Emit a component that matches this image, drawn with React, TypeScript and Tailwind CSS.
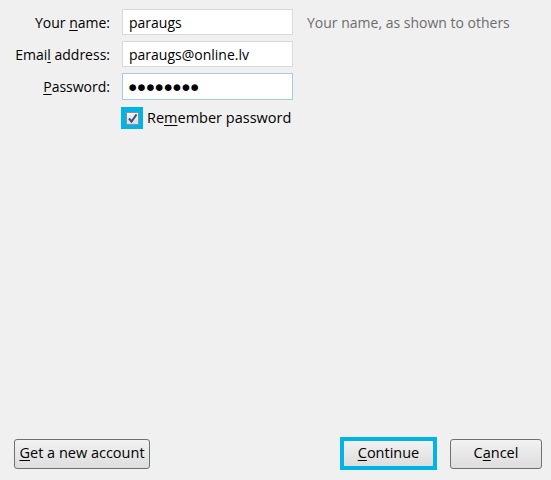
import React from 'react';

const U: React.FC<{ children: React.ReactNode }> = ({ children }) => <span className="underline underline-offset-2">{children}</span>;

const App: React.FC = () => {
  const btn =
    'h-[30px] rounded-[3px] border border-[#707070] bg-gradient-to-b from-[#f2f2f2] to-[#dddddd] text-[14.5px] text-black leading-none';

  return (
    <div className="h-[480px] w-[551px] bg-[#f0f0f0] flex flex-col justify-between font-['Open_Sans','Noto_Sans',sans-serif] text-[14px] text-black">
      <div className="pt-[9px] grid grid-cols-[110px_171px_auto] gap-x-3 gap-y-[6px] items-center">
        <label className="text-right">Your <U>n</U>ame:</label>
        <input
          readOnly
          value="paraugs"
          className="h-[26px] border border-[#d9d9d9] bg-white px-[6px] outline-none"
        />
        <span className="pl-[2px] text-[#6d6d6d]">Your name, as shown to others</span>

        <label className="text-right">Emai<U>l</U> address:</label>
        <input
          readOnly
          value="paraugs@online.lv"
          className="h-[26px] border border-[#d9d9d9] bg-white px-[6px] outline-none"
        />
        <span />

        <label className="text-right"><U>P</U>assword:</label>
        <div className="h-[27px] border border-[#a9c8e6] bg-white px-[5px] flex items-center text-[15.5px] tracking-[-0.5px]">
          ●●●●●●●●
        </div>
        <span />

        <span />
        <div className="flex items-center gap-[4px] -ml-[1px] pt-[1px]">
          <span className="w-[22px] h-[22px] bg-[#00b4e6] flex items-center justify-center">
            <span className="w-[13px] h-[13px] border border-[#8e8f8f] bg-gradient-to-b from-[#f4f4f4] to-[#dcdcdc] flex items-center justify-center">
              <svg width="11" height="11" viewBox="0 0 11 11">
                <path d="M2 5.5 L4.5 8.5 L9.5 1.5" fill="none" stroke="#3b4c8c" strokeWidth="2" />
              </svg>
            </span>
          </span>
          <span className="whitespace-nowrap text-[14.5px]">Re<U>m</U>ember password</span>
        </div>
        <span />
      </div>

      <div className="flex items-center pl-[14px] pr-[9px] pb-[10px]">
        <button className={`${btn} w-[136px]`}>
          <U>G</U>et a new account
        </button>
        <div className="ml-auto flex items-center gap-[13px]">
          <button className="h-[33px] w-[97px] border-[4px] border-[#00b4e6] bg-gradient-to-b from-[#f2f2f2] to-[#dddddd] text-[14.5px] leading-none">
            <U>C</U>ontinue
          </button>
          <button className={`${btn} w-[92px]`}>
            C<U>a</U>ncel
          </button>
        </div>
      </div>
    </div>
  );
};

export default App;
